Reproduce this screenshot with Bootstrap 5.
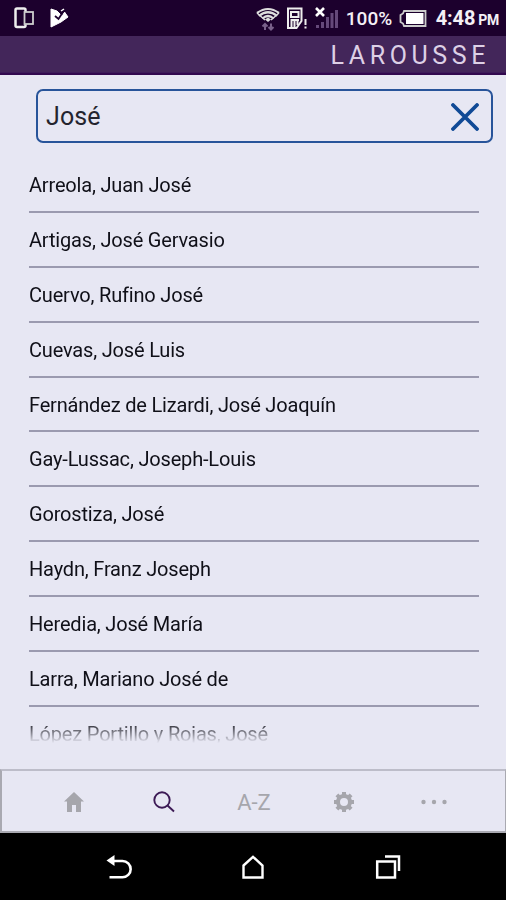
<!DOCTYPE html>
<html lang="es">
<head>
<meta charset="utf-8">
<meta name="viewport" content="width=device-width, initial-scale=1">
<title>Larousse</title>
<link rel="stylesheet" href="https://cdn.jsdelivr.net/npm/bootstrap@5.3.0/dist/css/bootstrap.min.css">
<style>
body{font-family:Roboto,"Liberation Sans",sans-serif;background:#e7e7f3;color:#16161f}
svg{display:block;flex:none}
.screen{height:900px;width:506px;overflow:hidden}
.status{height:36px;background:#1c002d;color:#f4f0f6;padding:0 7px 0 14px}
.status .pct{font-size:19px;font-weight:500;line-height:36px;margin-left:7px;width:49px;padding-top:2px;letter-spacing:.1px}
.status .clock{font-size:20px;font-weight:700;line-height:36px;margin-left:9px;padding-top:2px;letter-spacing:-.1px}
.status .clock small{font-size:14px;margin-left:3px;letter-spacing:-.3px}
.sim{margin-left:7px}
.signal{margin-left:8px}
.battery{margin-left:4px}
.brandbar{height:39px;background:#43265a;border-bottom:2px solid #32094f;box-shadow:inset 0 -1px #3e1c5a;padding-right:13px;color:#ddd0e6;font-size:25px;letter-spacing:4.6px;line-height:39px;padding-right:16px}
.search{height:54px;margin:13.5px 13px 0 36px;border:2.5px solid #28549a;border-radius:7px;padding:2px 12px 0 8px;font-size:25px}
.search input{font-size:25px;color:#24242e;line-height:1;letter-spacing:.1px}
.results{height:586px;margin:15.7px 27px 0 29px;overflow:hidden;-webkit-mask-image:linear-gradient(#000 563px,transparent 585px);mask-image:linear-gradient(#000 563px,transparent 585px)}
.results .list-group-item{height:54.87px;padding:15px 0 0;border:0;border-bottom:2px solid #9b9aaf;background:transparent;color:#101018;font-size:20px;letter-spacing:-.18px;line-height:24px;white-space:nowrap}
.tabs{height:64px;border:2px solid #a9a9b1;border-top-color:#bdbdc9;border-right-width:1px;padding:1px 25px 0 27px}
.tabs a{width:90px;height:60px;color:#a6a6ac;font-size:22px;text-decoration:none}
.tabs a.active{color:#3c1a55}
.sysnav{height:67px;background:#000;padding:0 51px 0 52px}
.sysnav span{width:135px;display:flex;justify-content:center}
</style>
</head>
<body>
<div class="screen d-flex flex-column">
  <div class="status d-flex align-items-center flex-shrink-0">
    <svg width="20" height="22" viewBox="0 0 20 22" fill="none" stroke="#eee"><rect x="1.5" y="1.5" width="10" height="18.5" rx="1.5" stroke-width="2.5"/><rect x="10.5" y="5" width="8.5" height="12" fill="#1c002d" stroke="#ccc" stroke-width="1.8"/></svg>
    <svg class="ms-3" width="19" height="20" viewBox="0 0 19 20"><path d="M1 1 7 3 9 5 12 8 14.500 4 18 9 11 14 1 19Z" fill="#fff" stroke="#fff" stroke-linejoin="round"/><path d="M5 8 8.500 11 14 2.500" fill="none" stroke="#1c002d" stroke-width="1.800"/><path d="m11 3 3-2" stroke="#fff" stroke-width="1.500"/></svg>
    <svg class="ms-auto" width="24" height="25" viewBox="0 0 24 25" fill="none" stroke="#ddd" stroke-width="2.200"><path d="M1 7Q12-1 23 7M3 10Q12 2.500 21 10M6.500 12.500Q12 7.500 17.500 12.500"/><path d="M1 7 9 14M23 7 15 14" stroke-width="1.500"/><path d="m9 13.500 3-2 3 2-3 2.500Z" fill="#ddd" stroke="none"/><path d="M9 24v-6m-2.500 2.500L9 18l2.500 2.500M15 17.500v6m-2.500-2.500 2.500 2.500 2.500-2.500" stroke="#79608a" stroke-width="2"/></svg>
    <svg class="sim" width="20" height="23" viewBox="0 0 20 23" fill="none" stroke="#eee" stroke-width="2"><path d="M1 1.500H14.500V14L9.500 21H1Z"/><path d="M4 5H11.500V10H4Z"/><path d="M4.500 12V20M7.500 14V20M10.500 13V18M3.500 13H12"/><path d="M18.500 12v6m0 1.500v2"/></svg>
    <svg class="signal" width="24" height="22" viewBox="0 0 24 22"><path d="M1 1 9 9M9 1 1 9" stroke="#fff" stroke-width="2.600"/><path d="M1 18h3v3H1zM6 15h3v6H6zM11 10h3v11h-3zM15.500 6h3v15h-3zM20 3h3v18h-3z" fill="#65497a"/></svg>
    <span class="pct">100%</span>
    <svg class="battery" width="28" height="19" viewBox="0 0 28 19"><path d="M5 2H26.500V17H5L4 14.500 1.500 13V6L4 4.500Z" fill="#1c002d" stroke="#ccc" stroke-width="1.800"/><path d="M7 4H24.500V15H7Z" fill="#fff"/></svg>
    <span class="clock text-nowrap">4:48<small>PM</small></span>
  </div>
  <header class="brandbar text-end flex-shrink-0">LAROUSSE</header>
  <div class="search d-flex align-items-center flex-shrink-0">
    <input class="form-control-plaintext p-0 flex-grow-1" type="text" value="José" aria-label="Buscar">
    <svg width="28" height="28" viewBox="0 0 28 28"><path d="M2 2 26 26M26 2 2 26" stroke="#104a96" stroke-width="3.800" stroke-linecap="round"/></svg>
  </div>
  <div class="results flex-shrink-0">
    <div class="list-group list-group-flush">
      <a class="list-group-item">Arreola, Juan José</a>
      <a class="list-group-item">Artigas, José Gervasio</a>
      <a class="list-group-item">Cuervo, Rufino José</a>
      <a class="list-group-item">Cuevas, José Luis</a>
      <a class="list-group-item">Fernández de Lizardi, José Joaquín</a>
      <a class="list-group-item">Gay-Lussac, Joseph-Louis</a>
      <a class="list-group-item">Gorostiza, José</a>
      <a class="list-group-item">Haydn, Franz Joseph</a>
      <a class="list-group-item">Heredia, José María</a>
      <a class="list-group-item">Larra, Mariano José de</a>
      <a class="list-group-item">López Portillo y Rojas, José</a>
    </div>
  </div>
  <nav class="tabs d-flex mt-auto flex-shrink-0">
    <a class="d-flex align-items-center justify-content-center" href="#" aria-label="Inicio"><svg width="20" height="20" viewBox="0 0 20 20" fill="currentColor"><path d="M10 0 20 9.500H17V20H12V13H8V20H3V9.500H0Z"/></svg></a>
    <a class="active d-flex align-items-center justify-content-center" href="#" aria-label="Buscar"><svg width="22" height="22" viewBox="0 0 22 22" fill="none" stroke="currentColor" stroke-width="1.900"><circle cx="9" cy="9" r="7.700"/><path d="m14.500 14.500 6.500 6"/></svg></a>
    <a class="d-flex align-items-center justify-content-center" href="#">A-Z</a>
    <a class="d-flex align-items-center justify-content-center" href="#" aria-label="Ajustes"><svg width="20" height="20" viewBox="0 0 20 20" fill="none" stroke="currentColor"><circle cx="10" cy="10" r="6" stroke-width="4"/><path d="M10 0v3.500M10 16.500V20M0 10h3.500M16.500 10H20M2.900 2.900l2.500 2.500M14.600 14.600l2.500 2.500M2.900 17.100l2.500-2.500M14.600 5.400l2.500-2.500" stroke-width="4"/></svg></a>
    <a class="d-flex align-items-center justify-content-center" href="#" aria-label="Más"><svg width="26" height="6" viewBox="0 0 26 6" fill="currentColor"><circle cx="2.500" cy="3" r="2.200"/><circle cx="13" cy="3" r="2.200"/><circle cx="23.500" cy="3" r="2.200"/></svg></a>
  </nav>
  <div class="sysnav d-flex align-items-center flex-shrink-0">
    <span><svg width="26" height="24" viewBox="0 0 26 24" fill="none" stroke="#fff" stroke-width="2.600"><path d="M7 6H16.500A8 8 0 0 1 16.500 22.300H3.500"/><path d="M.5 5.500 8.500 0V11Z" fill="#fff" stroke="none"/></svg></span>
    <span><svg width="22" height="24" viewBox="0 0 22 24" fill="none" stroke="#fff" stroke-width="2.400"><path d="M1.500 10.500 11 1.800 20.500 10.500V22.500H1.500Z"/></svg></span>
    <span><svg width="26" height="24" viewBox="0 0 26 24" fill="none" stroke="#fff" stroke-width="2.500"><path d="M2.200 6.500H20V22.500H2.200ZM10 1.500H24V16"/></svg></span>
  </div>
</div>
<script src="https://cdn.jsdelivr.net/npm/bootstrap@5.3.0/dist/js/bootstrap.bundle.min.js"></script>
</body>
</html>
